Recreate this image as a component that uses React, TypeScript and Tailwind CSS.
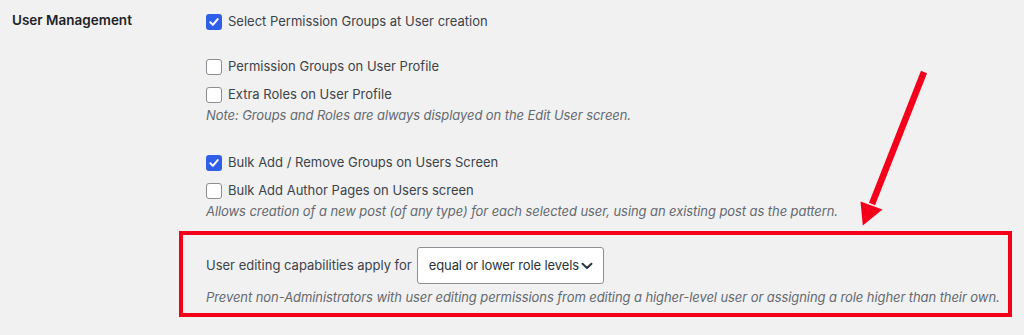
import React from "react";

function Box({ checked }: { checked?: boolean }) {
  if (checked) {
    return (
      <span className="w-4 h-4 shrink-0 rounded-[3px] bg-[#2f5fe8] flex items-center justify-center">
        <svg width="12" height="12" viewBox="0 0 12 12">
          <path d="M2.3 6.3 L4.9 8.9 L9.7 3.1" fill="none" stroke="#fff" strokeWidth="2" strokeLinecap="round" strokeLinejoin="round" />
        </svg>
      </span>
    );
  }
  return <span className="w-4 h-4 shrink-0 rounded-[3px] bg-white border border-[#8a8d91]" />;
}

function Row({ checked, label, className = "" }: { checked?: boolean; label: string; className?: string }) {
  return (
    <div className={`flex items-center h-6 gap-[6px] text-[13px] text-[#3c434a] ${className}`}>
      <Box checked={checked} />
      <span>{label}</span>
    </div>
  );
}

export default function App() {
  return (
    <div
      className="relative w-[1024px] h-[335px] overflow-hidden bg-[#f1f1f1]"
      style={{ fontFamily: "Inter, 'Liberation Sans', sans-serif" }}
    >
      <div className="flex">
        <div className="w-[206px] shrink-0 pl-3 pt-[10px] text-[13.5px] leading-5 font-semibold text-[#1d2327]">
          User Management
        </div>
        <div className="flex flex-col pt-[10px]">
          <Row checked label="Select Permission Groups at User creation" />
          <Row label="Permission Groups on User Profile" className="mt-[21px]" />
          <Row label="Extra Roles on User Profile" className="mt-1" />
          <p className="mt-[-1px] text-[13px] leading-[18px] italic tracking-[-0.08px] text-[#646970]">
            Note: Groups and Roles are always displayed on the Edit User screen.
          </p>
          <Row checked label="Bulk Add / Remove Groups on Users Screen" className="mt-[27px]" />
          <Row label="Bulk Add Author Pages on Users screen" className="mt-1" />
          <p className="mt-[-1px] text-[13px] leading-[18px] italic tracking-[-0.08px] text-[#646970]">
            Allows creation of a new post (of any type) for each selected user, using an existing post as the pattern.
          </p>
          <div className="mt-[11px] -ml-[27px] w-[833px] border-4 border-[#f5001a] pt-3 pl-[23px] pb-[7px]">
            <div className="flex items-center gap-[5px]">
              <span className="text-[13px] text-[#3c434a]">User editing capabilities apply for</span>
              <div className="h-[37px] w-[187px] bg-white border border-[#8c8f94] rounded-[3px] flex items-center pl-[11px] gap-[2px] text-[13px] tracking-[-0.1px] whitespace-nowrap text-[#2c3338]">
                <span>equal or lower role levels</span>
                <svg width="12" height="8" viewBox="0 0 12 8" className="shrink-0">
                  <path d="M1.5 1.8 L6 6 L10.5 1.8" fill="none" stroke="#2c3338" strokeWidth="2" strokeLinecap="round" strokeLinejoin="round" />
                </svg>
              </div>
            </div>
            <p className="mt-1 text-[13px] leading-[18px] italic tracking-[-0.08px] whitespace-nowrap text-[#646970]">
              Prevent non-Administrators with user editing permissions from editing a higher-level user or assigning a role higher than their own.
            </p>
          </div>
        </div>
      </div>
      <svg className="absolute left-0 top-0 pointer-events-none" width="1024" height="335" viewBox="0 0 1024 335">
        <line x1="924" y1="72" x2="872" y2="204" stroke="#f5001a" strokeWidth="6.5" />
        <polygon points="860.5,201.5 882.5,209.5 862.8,225.5" fill="#f5001a" />
      </svg>
    </div>
  );
}
